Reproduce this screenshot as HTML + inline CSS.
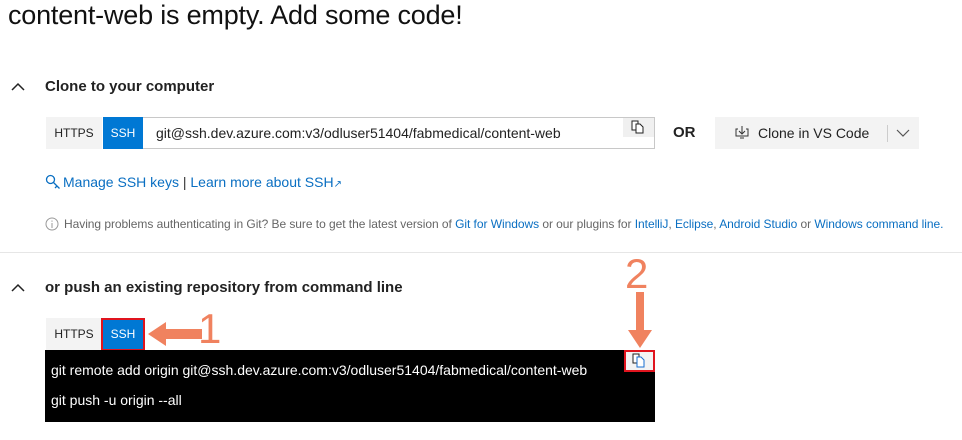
<!DOCTYPE html>
<html><head><meta charset="utf-8"><style>
*{margin:0;padding:0;box-sizing:border-box}
body{width:962px;height:440px;background:#fff;font-family:"Liberation Sans",sans-serif;position:relative;overflow:hidden;color:#222}
.a{position:absolute;white-space:nowrap}
.blue{color:#0a6fc2}
</style></head><body>
<div class="a" style="left:8px;top:0px;font-size:27px;color:#111;letter-spacing:-0.2px">content-web is empty. Add some code!</div>

<svg class="a" style="left:10px;top:82px" width="16" height="10"><path d="M2 8 L8 2 L14 8" fill="none" stroke="#222" stroke-width="1.5"/></svg>
<div class="a" style="left:45px;top:78px;font-size:15px;font-weight:bold;color:#222">Clone to your computer</div>

<div class="a" style="left:46px;top:117px;width:56px;height:32px;background:#f3f3f3;font-size:12px;line-height:32px;text-align:center;color:#222">HTTPS</div>
<div class="a" style="left:103px;top:117px;width:40px;height:32px;background:#0078d4;font-size:12px;line-height:32px;text-align:center;color:#fff">SSH</div>
<div class="a" style="left:143px;top:117px;width:512px;height:32px;border:1px solid #c8c8c8;border-left:none"></div>
<div class="a" style="left:156px;top:117px;font-size:14px;line-height:32px;color:#222">git@ssh.dev.azure.com:v3/odluser51404/fabmedical/content-web</div>
<div class="a" style="left:623px;top:118px;width:31px;height:19px;background:#f0f0f0"></div>
<svg class="a" style="left:631px;top:120px" width="14" height="14"><path d="M1 1h6v9H1z" fill="#fff" stroke="#222"/><path d="M5 4h4l3 3v6H5z" fill="#fff" stroke="#222"/></svg>
<div class="a" style="left:673px;top:124px;font-size:15px;font-weight:bold;color:#222">OR</div>
<div class="a" style="left:715px;top:117px;width:204px;height:32px;background:#f3f3f3"></div>
<svg class="a" style="left:735px;top:125px" width="14" height="14"><path d="M3 4H1v7h12V4h-2M7 1v8M4 6l3 3 3-3M5 13h4" fill="none" stroke="#333"/></svg>
<div class="a" style="left:758px;top:117px;font-size:14px;line-height:32px;color:#222">Clone in VS Code</div>
<div class="a" style="left:887px;top:125px;width:1px;height:17px;background:#ccc"></div>
<svg class="a" style="left:895px;top:128px" width="16" height="10"><path d="M2 2 L8 8 L14 2" fill="none" stroke="#555" stroke-width="1.2"/></svg>

<svg class="a" style="left:45px;top:174px" width="16" height="16"><circle cx="5.5" cy="5.5" r="4" fill="none" stroke="#0a6fc2" stroke-width="1.3"/><path d="M8.5 8.5l6 6M12 12l-2 2" stroke="#0a6fc2" stroke-width="1.3"/></svg>
<div class="a blue" style="left:63px;top:174px;font-size:14px">Manage SSH keys <span style="color:#333">|</span> Learn more about SSH<span style="font-size:10px">↗</span></div>

<svg class="a" style="left:45px;top:217px" width="14" height="14"><circle cx="7" cy="7" r="6" fill="none" stroke="#999"/><path d="M7 6v5M7 3.5v1.2" stroke="#999"/></svg>
<div class="a" style="left:64px;top:217px;font-size:12px;color:#666;letter-spacing:-0.05px">Having problems authenticating in Git? Be sure to get the latest version of <span class="blue">Git for Windows</span> or our plugins for <span class="blue">IntelliJ</span>, <span class="blue">Eclipse</span>, <span class="blue">Android Studio</span> or <span class="blue">Windows command line.</span></div>

<div class="a" style="left:0;top:252px;width:962px;height:1px;background:#e6e6e6"></div>

<svg class="a" style="left:10px;top:283px" width="16" height="10"><path d="M2 8 L8 2 L14 8" fill="none" stroke="#222" stroke-width="1.5"/></svg>
<div class="a" style="left:45px;top:279px;font-size:15px;font-weight:bold;color:#222">or push an existing repository from command line</div>

<div class="a" style="left:46px;top:318px;width:56px;height:32px;background:#f3f3f3;font-size:12px;line-height:32px;text-align:center;color:#222">HTTPS</div>
<div class="a" style="left:101px;top:318px;width:44px;height:33px;background:#0078d4;border:2px solid #e0141e;font-size:12px;line-height:29px;text-align:center;color:#fff">SSH</div>
<div class="a" style="left:45px;top:350px;width:610px;height:72px;background:#000"></div>
<div class="a" style="left:51px;top:362px;font-size:14px;color:#fff">git remote add origin git@ssh.dev.azure.com:v3/odluser51404/fabmedical/content-web</div>
<div class="a" style="left:51px;top:392px;font-size:14px;color:#fff">git push -u origin --all</div>
<div class="a" style="left:624px;top:350px;width:31px;height:22px;background:#f3f3f3;border:2px solid #e0141e"></div>
<svg class="a" style="left:632px;top:353px" width="14" height="15"><path d="M1 1h6v9H1z" fill="#fff" stroke="#222"/><path d="M5 4h4l3 3v7H5z" fill="#fff" stroke="#1a6fd0"/></svg>

<svg class="a" style="left:140px;top:300px" width="100" height="60"><path d="M8 34 L26 22 L26 29 L62 29 L62 39 L26 39 L26 46 Z" fill="#f0825f"/></svg>
<div class="a" style="left:198px;top:305px;font-size:42px;color:#f0825f;font-weight:300">1</div>
<div class="a" style="left:625px;top:250px;font-size:42px;color:#f0825f">2</div>
<svg class="a" style="left:625px;top:292px" width="30" height="58"><path d="M11 0h8v38h8L15 56 3 38h8z" fill="#f0825f"/></svg>
</body></html>
